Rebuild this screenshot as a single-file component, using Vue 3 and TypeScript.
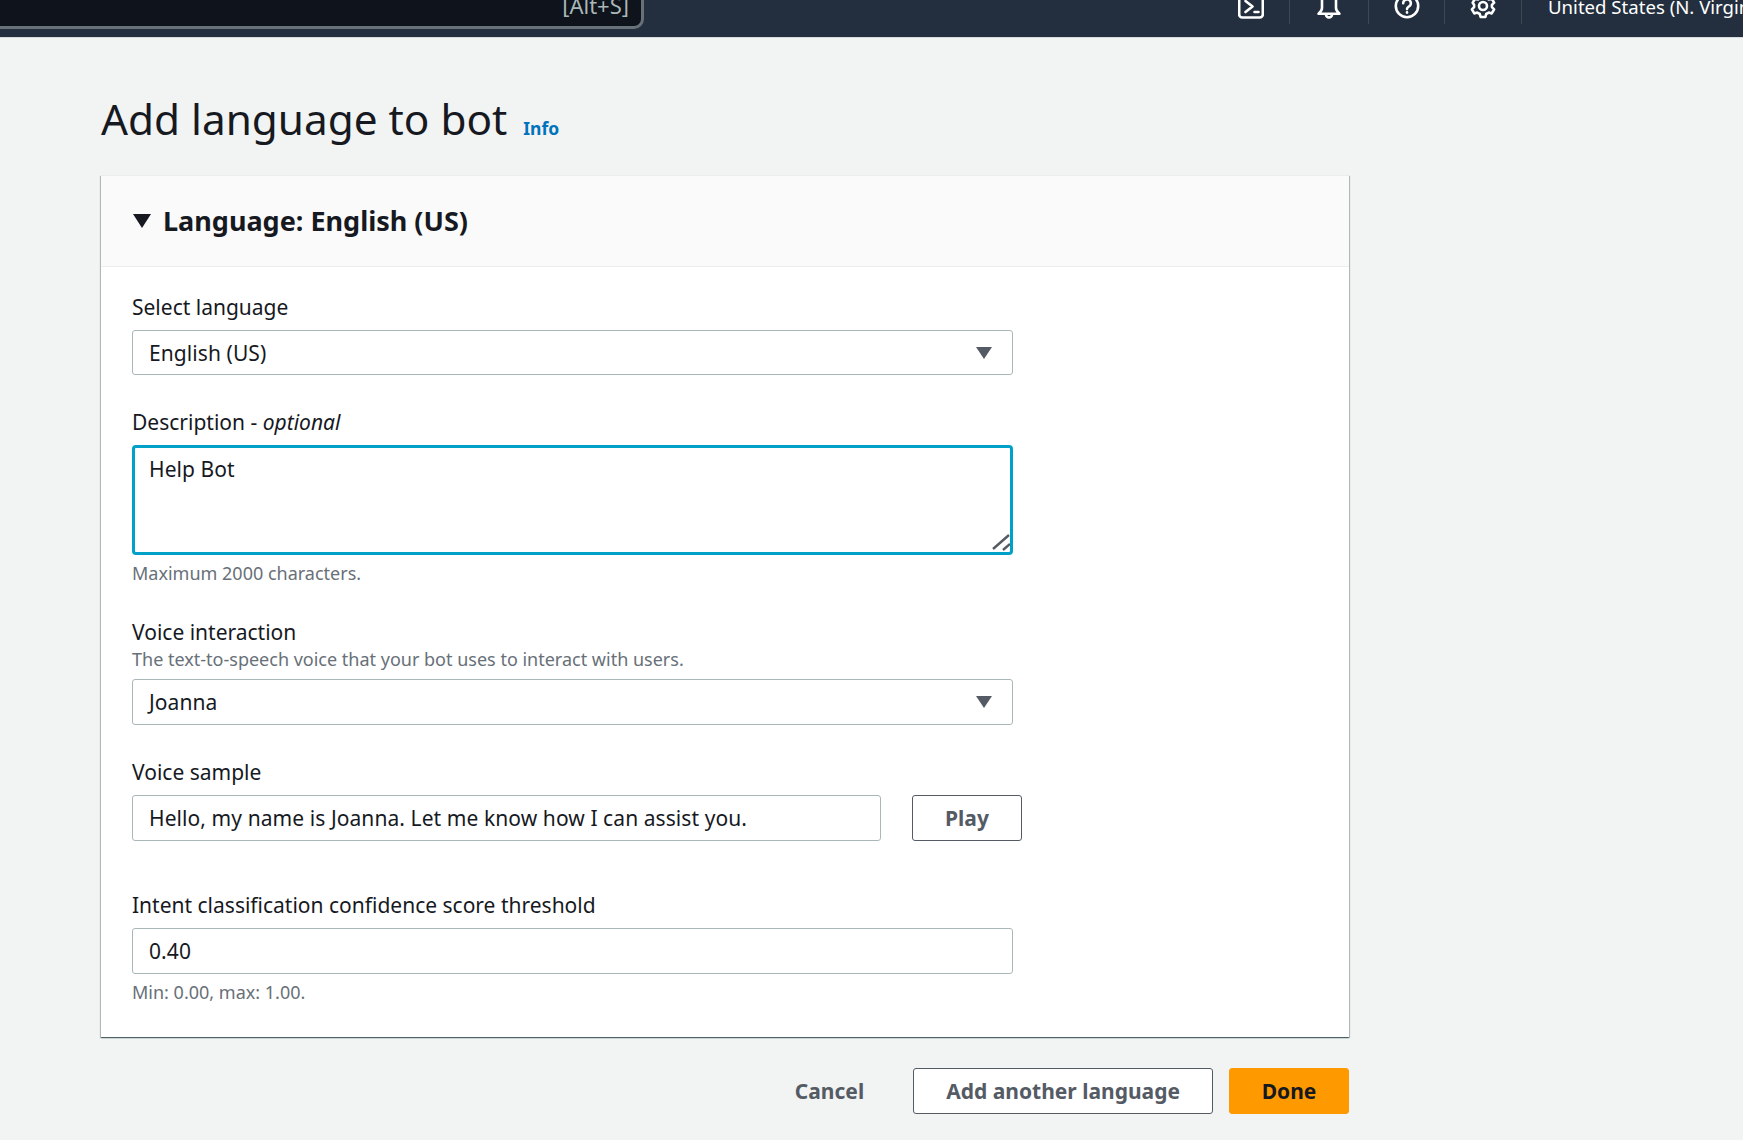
<template>
  <div class="page">
    <!-- Top nav, cropped at the top of the window -->
    <header class="topbar">
      <div class="search"><span class="search-hint">[Alt+S]</span></div>
      <div class="nav">
        <div class="nav-cell terminal">
          <svg width="26" height="26" viewBox="0 0 26 26" fill="none" stroke="#fff" stroke-width="2.6" stroke-linecap="round" stroke-linejoin="round">
            <rect x="1.2" y="-6" width="23.6" height="30.5" rx="3" />
            <path d="M7.5 8l7 5.5-7 5.5M16.5 19h4" />
          </svg>
        </div>
        <div class="nav-cell bell">
          <svg width="26" height="26" viewBox="0 0 26 26" fill="none" stroke="#fff" stroke-width="2.6" stroke-linecap="round" stroke-linejoin="round">
            <path d="M6 6v9c0 2.5-1.2 3.8-3.4 5.8h20.8C21.2 18.8 20 17.5 20 15V6" />
            <path d="M10 21.5a3 3 0 006 0" />
          </svg>
        </div>
        <div class="nav-cell help">
          <svg width="26" height="26" viewBox="0 0 26 26" fill="none" stroke="#fff" stroke-width="2.6" stroke-linecap="round" stroke-linejoin="round">
            <circle cx="13" cy="13" r="11.2" />
            <path d="M9.2 10.2a3.8 3.8 0 117 2c-1 1.4-3.2 1.8-3.2 3.9" />
            <path d="M13 19.4v.2" />
          </svg>
        </div>
        <div class="nav-cell gear">
          <svg width="26" height="26" viewBox="0 0 26 26" fill="none" stroke="#fff" stroke-width="2.6" stroke-linecap="round" stroke-linejoin="round">
            <circle cx="13" cy="13" r="4" />
            <path d="M10.6 2h4.8l.8 3 2.5 1.4 3-.8 2.4 4.1-2.2 2.2v2.2l2.2 2.2-2.4 4.1-3-.8-2.5 1.4-.8 3h-4.8l-.8-3-2.5-1.4-3 .8-2.4-4.1 2.2-2.2v-2.2L2.7 9.7l2.4-4.1 3 .8 2.5-1.4z" />
          </svg>
        </div>
        <div class="region">United States (N. Virginia)</div>
      </div>
    </header>

    <main class="content">
      <h1 class="title">Add language to bot <a class="info">Info</a></h1>

      <section class="card">
        <div class="card-head">
          <svg class="caret" width="18" height="14" viewBox="0 0 18 14"><path d="M0 0h18L9 14z" fill="#16191f" /></svg>
          <h2>Language: English (US)</h2>
        </div>

        <div class="card-body">
          <label class="label">Select language</label>
          <div class="control select">
            <span>English (US)</span>
            <svg width="16" height="12" viewBox="0 0 16 12"><path d="M0 0h16L8 12z" fill="#545b64" /></svg>
          </div>

          <label class="label next">Description - <em>optional</em></label>
          <div class="control textarea">
            <span>Help Bot</span>
            <svg class="grip" width="20" height="20" viewBox="0 0 20 20" fill="none" stroke="#545b64" stroke-width="2.4">
              <path d="M3 17L19 3M13 18l7-6" />
            </svg>
          </div>
          <p class="hint under">Maximum 2000 characters.</p>

          <label class="label next">Voice interaction</label>
          <p class="hint desc">The text-to-speech voice that your bot uses to interact with users.</p>
          <div class="control select tall">
            <span>Joanna</span>
            <svg width="16" height="12" viewBox="0 0 16 12"><path d="M0 0h16L8 12z" fill="#545b64" /></svg>
          </div>

          <label class="label next">Voice sample</label>
          <div class="sample-row">
            <div class="control sample tall">Hello, my name is Joanna. Let me know how I can assist you.</div>
            <button class="btn play">Play</button>
          </div>

          <label class="label next far">Intent classification confidence score threshold</label>
          <div class="control tall">0.40</div>
          <p class="hint under">Min: 0.00, max: 1.00.</p>
        </div>
      </section>

      <footer class="actions">
        <button class="btn link">Cancel</button>
        <button class="btn">Add another language</button>
        <button class="btn primary">Done</button>
      </footer>
    </main>
  </div>
</template>

<script setup lang="ts">
</script>

<style>
html, body {
  margin: 0;
  background: #f2f3f3;
}
</style>

<style scoped>
.page {
  height: 1140px;
  overflow: hidden;
  background: #f2f3f3;
  font-family: "Noto Sans", "Open Sans", sans-serif;
  font-size: 21px;
  color: #16191f;
}

.topbar {
  display: flex;
  justify-content: space-between;
  height: 37px;
  border-bottom: 1px solid #d5dbdb;
  background: #232f3e;
  overflow: hidden;
}
.search {
  box-sizing: border-box;
  display: flex;
  align-items: flex-end;
  justify-content: flex-end;
  flex: none;
  width: 654px;
  height: 39px;
  margin: -10px 0 0 -10px;
  padding: 0 12px 9px 0;
  background: #0e131c;
  border: 3px solid #687078;
  border-radius: 10px;
}
.search-hint {
  font-size: 22px;
  line-height: 24px;
  color: #aab7b8;
}
.nav {
  display: flex;
  flex: none;
  width: 532px;
  height: 24px;
}
.nav-cell {
  display: flex;
  flex: none;
  justify-content: center;
  box-sizing: border-box;
  height: 24px;
  border-right: 1px solid #414750;
}
.nav-cell svg {
  flex: none;
  margin-top: -7px;
}
.terminal {
  width: 79px;
  padding-left: 2px;
}
.bell {
  width: 79px;
}
.help {
  width: 76px;
}
.gear {
  width: 77px;
}
.region {
  flex: none;
  margin-left: 26px;
  margin-top: -5px;
  font-size: 18.6px;
  line-height: 24px;
  color: #fff;
  white-space: nowrap;
}

.content {
  width: 1248px;
  margin-left: 101px;
}
.title {
  display: flex;
  align-items: baseline;
  gap: 16px;
  margin: 53px 0 28px;
  font-size: 42.3px;
  font-weight: 400;
  line-height: 56px;
}
.info {
  font-size: 17.5px;
  font-weight: 700;
  line-height: 1;
  color: #0073bb;
}

.card {
  background: #fff;
  box-shadow: 0 1px 1px 0 rgba(0, 28, 36, 0.5), 1px 1px 1px 0 rgba(0, 28, 36, 0.2), -1px 1px 1px 0 rgba(0, 28, 36, 0.2);
  border-top: 1px solid #eaeded;
}
.card-head {
  display: flex;
  align-items: center;
  gap: 12px;
  box-sizing: border-box;
  height: 91px;
  padding-left: 32px;
  background: #fafafa;
  border-bottom: 1px solid #eaeded;
}
.card-head h2 {
  margin: 0 0 2px;
  font-size: 27px;
  font-weight: 700;
}
.card-body {
  padding: 26px 31px 33px;
}

.label {
  display: block;
  margin-bottom: 9px;
  line-height: 28px;
}
.label.next {
  margin-top: 33px;
}
.label.far {
  margin-top: 50px;
}
.hint {
  margin: 0;
  font-size: 18px;
  line-height: 24px;
  color: #687078;
}
.hint.under {
  margin-top: 6px;
}
.hint.desc {
  margin: -8px 0 8px;
}

.control {
  display: flex;
  align-items: center;
  justify-content: space-between;
  box-sizing: border-box;
  width: 881px;
  height: 45px;
  padding: 0 20px 0 16px;
  background: #fff;
  border: 1px solid #aab7b8;
  border-radius: 3px;
  letter-spacing: 0.08px;
}
.control.tall {
  height: 46px;
}
.textarea {
  position: relative;
  align-items: flex-start;
  height: 110px;
  padding: 7px 14px;
  border: 3px solid #00a1c9;
  border-radius: 4px;
}
.grip {
  position: absolute;
  right: 0;
  bottom: 0;
}

.sample-row {
  display: flex;
  align-items: flex-start;
  gap: 31px;
}
.control.sample {
  flex: none;
  width: 749px;
}

.btn {
  box-sizing: border-box;
  height: 46px;
  padding: 0 32px;
  background: #fff;
  border: 1px solid #545b64;
  border-radius: 3px;
  font-family: inherit;
  font-size: 21px;
  font-weight: 700;
  color: #545b64;
}
.play {
  width: 110px;
  padding: 0;
}
.actions {
  display: flex;
  justify-content: flex-end;
  gap: 16px;
  margin-top: 31px;
}
.link {
  margin-right: 33px;
  padding: 0 0;
  background: none;
  border: none;
}
.primary {
  width: 120px;
  padding: 0;
  background: #f90;
  border-color: #f90;
  color: #16191f;
}
</style>
